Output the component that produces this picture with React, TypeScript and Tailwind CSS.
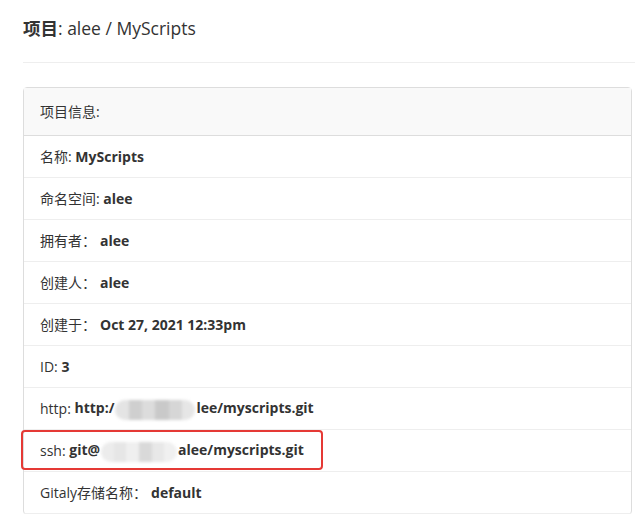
import React from 'react';

function Blur({ w, tones }: { w: number; tones: string[] }) {
  return (
    <span className="relative inline-block h-[20px] align-middle mx-[1px]" style={{ width: w }}>
      <span className="absolute inset-0 flex overflow-hidden rounded-full blur-[1.5px]">
        {tones.map((t, i) => (
          <span key={i} className="flex-1 h-full" style={{ background: t }} />
        ))}
      </span>
    </span>
  );
}

export default function App() {
  const rows: { label: string; value: React.ReactNode; gap?: boolean }[] = [
    { label: '名称: ', value: 'MyScripts' },
    { label: '命名空间: ', value: 'alee' },
    { label: '拥有者：', value: 'alee', gap: true },
    { label: '创建人：', value: 'alee', gap: true },
    { label: '创建于：', value: 'Oct 27, 2021 12:33pm', gap: true },
    { label: 'ID: ', value: '3' },
    {
      label: 'http: ',
      value: (
        <>
          http:/
          <Blur w={80} tones={['#e4e4e4', '#cfcfcf', '#dcdcdc', '#c9c9c9', '#d6d6d6', '#e6e6e6']} />
          lee/myscripts.git
        </>
      ),
    },
    {
      label: 'ssh: ',
      value: (
        <>
          git@
          <Blur w={76} tones={['#ececec', '#e6e6e6', '#efefef', '#d9d9d9', '#e8e8e8', '#f0f0f0']} />
          alee/myscripts.git
        </>
      ),
    },
    { label: 'Gitaly存储名称：', value: 'default', gap: true },
  ];

  return (
    <div
      className="w-[635px] h-[514px] overflow-hidden bg-white text-[#333] pl-[23px]"
      style={{ fontFamily: '"Open Sans", "Noto Sans CJK SC", sans-serif' }}
    >
      <h1 className="pt-[15px] pb-[21px] text-[17.5px] leading-[26px] border-b border-[#eeeeee]">
        <span className="font-bold">项目</span>: alee / MyScripts
      </h1>
      <div className="mt-[24px] w-[609px] border border-[#dddddd] rounded-[4px] relative">
        <div className="h-[48px] flex items-center px-[16px] bg-[#f9f9f9] border-b border-[#dddddd] text-[14px]">
          项目信息:
        </div>
        {rows.map((r, i) => (
          <div
            key={i}
            className="h-[42px] flex items-center px-[16px] border-b border-[#eeeeee] text-[14px] whitespace-pre"
          >
            <span>{r.label}</span>
            {r.gap && <span className="w-[4px]" />}
            <span className="font-bold">{r.value}</span>
          </div>
        ))}
        <div className="absolute left-[-3px] top-[342px] w-[302px] h-[40px] border-2 border-[#e53935] rounded-[4px] pointer-events-none" />
      </div>
    </div>
  );
}
